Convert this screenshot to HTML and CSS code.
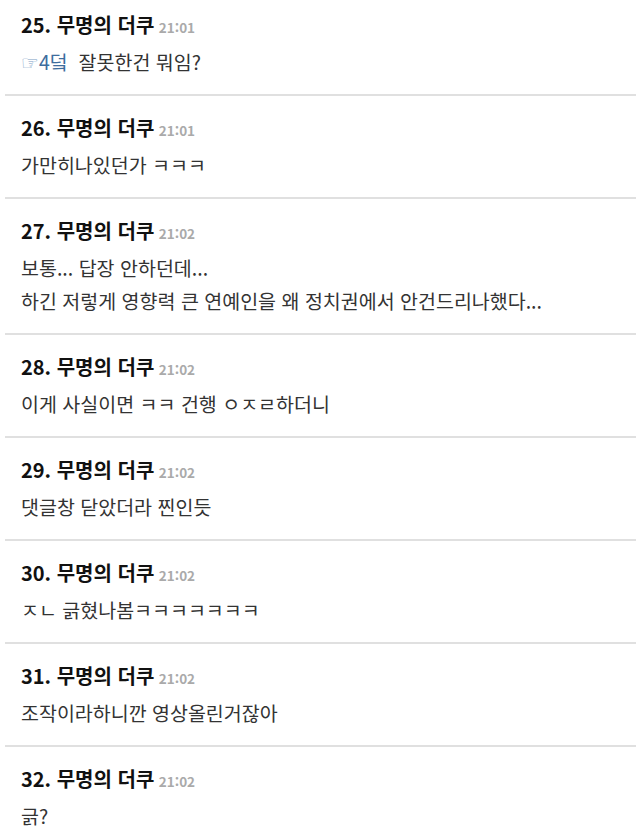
FILE: index.html
```html
<!DOCTYPE html>
<html lang="ko">
<head>
<meta charset="utf-8">
<link rel="stylesheet" href="styles.css">
</head>
<body>
<ul class="comments">
  <li class="comment first">
    <div class="head"><span class="num">25. 무명의 더쿠</span> <span class="time">21:01</span></div>
    <p class="body"><span class="ref"><span class="hand">☞</span>4덬</span>&nbsp; 잘못한건 뭐임?</p>
  </li>
  <li class="comment">
    <div class="head"><span class="num">26. 무명의 더쿠</span> <span class="time">21:01</span></div>
    <p class="body">가만히나있던가 ㅋㅋㅋ</p>
  </li>
  <li class="comment">
    <div class="head"><span class="num">27. 무명의 더쿠</span> <span class="time">21:02</span></div>
    <p class="body">보통... 답장 안하던데...<br>하긴 저렇게 영향력 큰 연예인을 왜 정치권에서 안건드리나했다...</p>
  </li>
  <li class="comment">
    <div class="head"><span class="num">28. 무명의 더쿠</span> <span class="time">21:02</span></div>
    <p class="body">이게 사실이면 ㅋㅋ 건행 ㅇㅈㄹ하더니</p>
  </li>
  <li class="comment">
    <div class="head"><span class="num">29. 무명의 더쿠</span> <span class="time">21:02</span></div>
    <p class="body">댓글창 닫았더라 찐인듯</p>
  </li>
  <li class="comment">
    <div class="head"><span class="num">30. 무명의 더쿠</span> <span class="time">21:02</span></div>
    <p class="body">ㅈㄴ 긁혔나봄ㅋㅋㅋㅋㅋㅋㅋ</p>
  </li>
  <li class="comment">
    <div class="head"><span class="num">31. 무명의 더쿠</span> <span class="time">21:02</span></div>
    <p class="body">조작이라하니깐 영상올린거잖아</p>
  </li>
  <li class="comment last">
    <div class="head"><span class="num">32. 무명의 더쿠</span> <span class="time">21:02</span></div>
    <p class="body">긁?</p>
  </li>
</ul>
</body>
</html>
```
FILE: styles.css
```css
html, body {
  margin: 0;
  padding: 0;
  background: #fff;
}
body {
  font-family: "Noto Sans CJK KR", "Noto Sans", sans-serif;
  color: #333;
}
.comments {
  list-style: none;
  margin: 0 4px 0 5px;
  padding: 0;
}
.comment {
  padding: 17px 0 16px 16px;
  border-bottom: 2px solid #e0e0e0;
}
.comment.first {
  padding-top: 10px;
  padding-bottom: 16px;
}
.comment.last {
  border-bottom: none;
}
.head {
  height: 30px;
  line-height: 30px;
  white-space: nowrap;
}
.num {
  font-size: 20px;
  font-weight: 700;
  color: #111;
}
.time {
  font-size: 13.5px;
  font-weight: 700;
  color: #aaa;
}
.body {
  margin: 5px 0 0;
  font-size: 19.5px;
  line-height: 33px;
  color: #333;
}
.ref {
  color: #3d6d9e;
  line-height: 1;
}
.hand {
  font-family: "DejaVu Sans", sans-serif;
  font-size: 20px;
  line-height: 1;
  color: #7a9dc4;
}
```
